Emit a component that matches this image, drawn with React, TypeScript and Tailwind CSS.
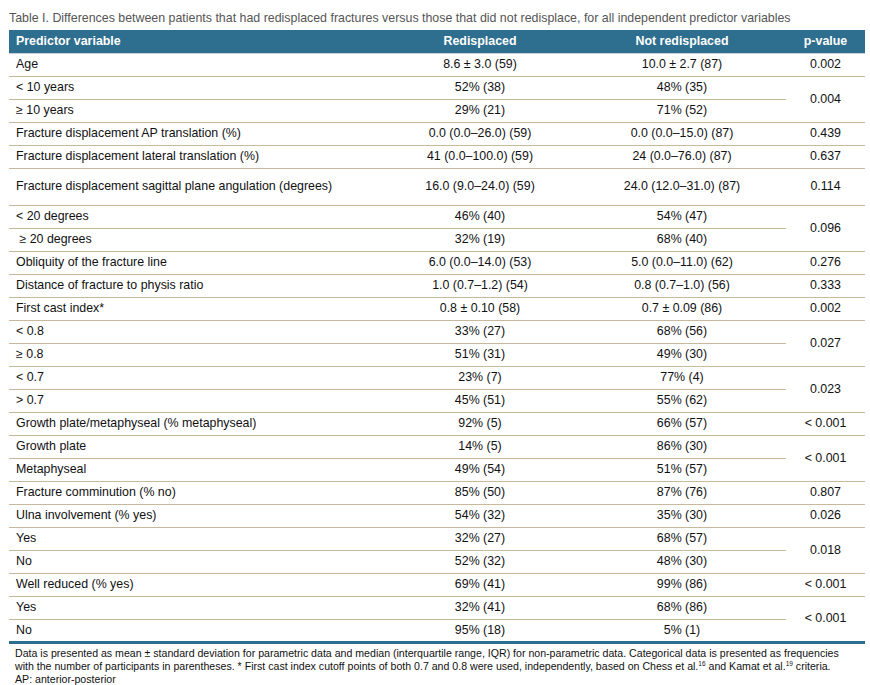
import React from 'react';

type Row = {
  label: string;
  red: string;
  notRed: string;
  p?: string;
  span?: number;
  tall?: boolean;
  indent?: boolean;
};

const rows: Row[] = [
  { label: 'Age', red: '8.6 ± 3.0 (59)', notRed: '10.0 ± 2.7 (87)', p: '0.002' },
  { label: '< 10 years', red: '52% (38)', notRed: '48% (35)', p: '0.004', span: 2 },
  { label: '≥ 10 years', red: '29% (21)', notRed: '71% (52)' },
  { label: 'Fracture displacement AP translation (%)', red: '0.0 (0.0–26.0) (59)', notRed: '0.0 (0.0–15.0) (87)', p: '0.439' },
  { label: 'Fracture displacement lateral translation (%)', red: '41 (0.0–100.0) (59)', notRed: '24 (0.0–76.0) (87)', p: '0.637' },
  { label: 'Fracture displacement sagittal plane angulation (degrees)', red: '16.0 (9.0–24.0) (59)', notRed: '24.0 (12.0–31.0) (87)', p: '0.114', tall: true },
  { label: '< 20 degrees', red: '46% (40)', notRed: '54% (47)', p: '0.096', span: 2 },
  { label: '≥ 20 degrees', red: '32% (19)', notRed: '68% (40)', indent: true },
  { label: 'Obliquity of the fracture line', red: '6.0 (0.0–14.0) (53)', notRed: '5.0 (0.0–11.0) (62)', p: '0.276' },
  { label: 'Distance of fracture to physis ratio', red: '1.0 (0.7–1.2) (54)', notRed: '0.8 (0.7–1.0) (56)', p: '0.333' },
  { label: 'First cast index*', red: '0.8 ± 0.10 (58)', notRed: '0.7 ± 0.09 (86)', p: '0.002' },
  { label: '< 0.8', red: '33% (27)', notRed: '68% (56)', p: '0.027', span: 2 },
  { label: '≥ 0.8', red: '51% (31)', notRed: '49% (30)' },
  { label: '< 0.7', red: '23% (7)', notRed: '77% (4)', p: '0.023', span: 2 },
  { label: '> 0.7', red: '45% (51)', notRed: '55% (62)' },
  { label: 'Growth plate/metaphyseal (% metaphyseal)', red: '92% (5)', notRed: '66% (57)', p: '< 0.001' },
  { label: 'Growth plate', red: '14% (5)', notRed: '86% (30)', p: '< 0.001', span: 2 },
  { label: 'Metaphyseal', red: '49% (54)', notRed: '51% (57)' },
  { label: 'Fracture comminution (% no)', red: '85% (50)', notRed: '87% (76)', p: '0.807' },
  { label: 'Ulna involvement (% yes)', red: '54% (32)', notRed: '35% (30)', p: '0.026' },
  { label: 'Yes', red: '32% (27)', notRed: '68% (57)', p: '0.018', span: 2 },
  { label: 'No', red: '52% (32)', notRed: '48% (30)' },
  { label: 'Well reduced (% yes)', red: '69% (41)', notRed: '99% (86)', p: '< 0.001' },
  { label: 'Yes', red: '32% (41)', notRed: '68% (86)', p: '< 0.001', span: 2 },
  { label: 'No', red: '95% (18)', notRed: '5% (1)' },
];

export default function App() {
  const last = rows.length - 1;
  return (
    <div className="w-[870px] h-[685px] bg-white text-[#111] px-[9px] pt-[10px]" style={{ fontFamily: '"Liberation Sans", Arial, sans-serif' }}>
      <div className="text-[12.4px] leading-[16px] text-[#555] mb-[4px] whitespace-nowrap">
        Table I. Differences between patients that had redisplaced fractures versus those that did not redisplace, for all independent predictor variables
      </div>

      <table className="w-[856px] border-collapse text-[12.4px] table-fixed">
        <colgroup>
          <col className="w-[373px]" />
          <col className="w-[196px]" />
          <col className="w-[208px]" />
          <col className="w-[79px]" />
        </colgroup>
        <thead>
          <tr className="bg-[#2e6e8e] text-white font-bold h-[23px]">
            <th className="text-left pl-[7px] border-b border-[#c9d3d9] font-bold">Predictor variable</th>
            <th className="text-center font-bold border-b border-[#c9d3d9]">Redisplaced</th>
            <th className="text-center font-bold border-b border-[#c9d3d9]">Not redisplaced</th>
            <th className="text-center font-bold border-b border-[#c9d3d9]">p-value</th>
          </tr>
        </thead>
        <tbody>
          {rows.map((r, i) => {
            const isLast = i === last;
            const bottom = isLast ? 'border-b-[3px] border-b-[#2e6e8e]' : 'border-b border-b-[#c9b99c]';
            const pBottom = i + (r.span ?? 1) - 1 === last ? 'border-b-[3px] border-b-[#2e6e8e]' : 'border-b border-b-[#c9b99c]';
            return (
              <tr key={i} className={r.tall ? 'h-[37px]' : 'h-[23px]'}>
                <td className={`pl-[7px] py-0 ${bottom}`}>
                  {r.indent ? '\u00a0' : ''}
                  {r.label}
                </td>
                <td className={`text-center py-0 ${bottom}`}>{r.red}</td>
                <td className={`text-center py-0 ${bottom}`}>{r.notRed}</td>
                {r.p !== undefined && (
                  <td rowSpan={r.span ?? 1} className={`text-center py-0 ${pBottom}`}>
                    {r.p}
                  </td>
                )}
              </tr>
            );
          })}
        </tbody>
      </table>

      <div className="text-[10.6px] leading-[13px] pl-[6px] pt-[3px] text-[#111] whitespace-nowrap">
        Data is presented as mean ± standard deviation for parametric data and median (interquartile range, IQR) for non-parametric data. Categorical data is presented as frequencies
        <br />
        with the number of participants in parentheses. * First cast index cutoff points of both 0.7 and 0.8 were used, independently, based on Chess et al.
        <sup className="text-[6.5px]">16</sup> and Kamat et al.<sup className="text-[6.5px]">19</sup> criteria.
        <br />
        AP: anterior-posterior
      </div>
    </div>
  );
}
